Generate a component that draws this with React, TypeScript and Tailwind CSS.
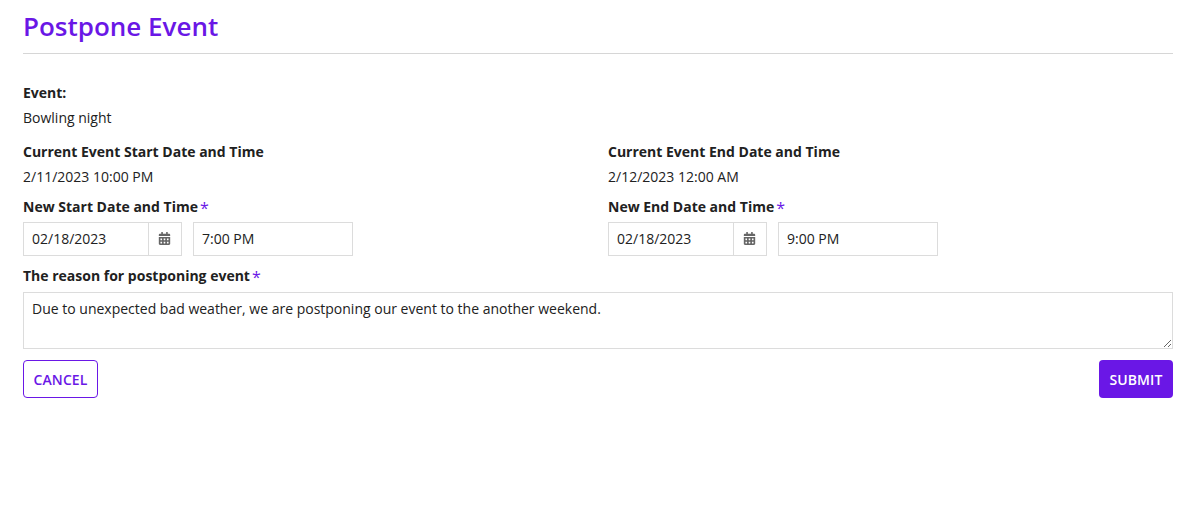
import { FaCalendarAlt } from "react-icons/fa";

function Required() {
    return <span className="relative top-[2px] ml-[2px] text-[16px] leading-none font-normal text-[#6a17e6]">*</span>;
}

function DateTime({ date, time }: { date: string; time: string }) {
    return (
        <div className="flex h-[34px] gap-[11px]">
            <div className="flex w-[159px] border border-[#dcdcdc]">
                <input
                    readOnly
                    value={date}
                    className="w-[125px] border-r border-[#dcdcdc] px-2 pb-[2px] text-[14px] text-[#212121] outline-none"
                />
                <div className="flex flex-1 items-center justify-center pr-px pb-[2px] text-[#666666]">
                    <FaCalendarAlt className="size-[13px]" />
                </div>
            </div>
            <input
                readOnly
                value={time}
                className="w-[160px] border border-[#dcdcdc] px-2 pb-[2px] text-[14px] text-[#212121] outline-none"
            />
        </div>
    );
}

export default function App() {
    return (
        <div className="h-[524px] bg-white pr-[22px] pl-[23px] font-['Open_Sans',sans-serif] text-[14px] text-[#212121]">
            <h1 className="h-[54px] border-b border-[#d6d6d6] pt-[8px] text-[26px] leading-[36px] font-semibold text-[#6a17e6]">
                Postpone Event
            </h1>

            <div className="mt-[29px] h-[20px] leading-[20px] font-bold">Event:</div>
            <div className="mt-[5px] h-[20px] leading-[20px]">Bowling night</div>

            <div className="mt-[14px] grid grid-cols-[585px_1fr]">
                <div>
                    <div className="h-[20px] leading-[20px] font-bold">Current Event Start Date and Time</div>
                    <div className="mt-[5px] h-[20px] leading-[20px]">2/11/2023 10:00 PM</div>
                </div>
                <div>
                    <div className="h-[20px] leading-[20px] font-bold">Current Event End Date and Time</div>
                    <div className="mt-[5px] h-[20px] leading-[20px]">2/12/2023 12:00 AM</div>
                </div>
            </div>

            <div className="mt-[10px] grid grid-cols-[585px_1fr]">
                <div>
                    <div className="mb-[5px] h-[20px] leading-[20px] font-bold">
                        New Start Date and Time
                        <Required />
                    </div>
                    <DateTime date="02/18/2023" time="7:00 PM" />
                </div>
                <div>
                    <div className="mb-[5px] h-[20px] leading-[20px] font-bold">
                        New End Date and Time
                        <Required />
                    </div>
                    <DateTime date="02/18/2023" time="9:00 PM" />
                </div>
            </div>

            <div className="mt-[10px] mb-[6px] h-[20px] leading-[20px] font-bold">
                The reason for postponing event
                <Required />
            </div>
            <textarea
                readOnly
                value="Due to unexpected bad weather, we are postponing our event to the another weekend."
                className="block h-[57px] w-full border border-[#dcdcdc] px-2 py-[6px] text-[14px] leading-[20px] outline-none"
            />

            <div className="mt-[11px] flex justify-between">
                <button className="h-[38px] w-[75px] rounded-[4px] border border-[#6a17e6] bg-white text-[14px] font-[550] tracking-[0.1px] text-[#6a17e6]">
                    CANCEL
                </button>
                <button className="h-[38px] w-[74px] rounded-[4px] bg-[#6a17e6] text-[14px] font-[550] tracking-[0.1px] text-white">
                    SUBMIT
                </button>
            </div>
        </div>
    );
}
